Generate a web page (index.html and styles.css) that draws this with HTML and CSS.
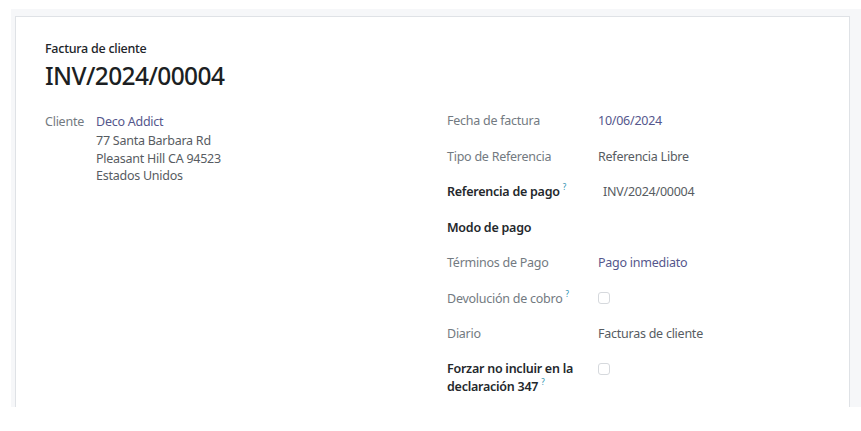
FILE: index.html
```html
<!DOCTYPE html>
<html lang="es">
<head>
<meta charset="utf-8">
<title>INV/2024/00004</title>
<link rel="stylesheet" href="styles.css">
</head>
<body>
<div class="sheet-bg">
  <div class="sheet">
    <div class="doc-type">Factura de cliente</div>
    <h1 class="doc-name">INV/2024/00004</h1>
    <div class="groups">
      <div class="group left">
        <div class="label">Cliente</div>
        <div class="value">
          <div class="link">Deco Addict</div>
          <div class="address">77 Santa Barbara Rd<br>Pleasant Hill CA 94523<br>Estados Unidos</div>
        </div>
      </div>
      <div class="group right">
        <div class="label">Fecha de factura</div>
        <div class="value link">10/06/2024</div>

        <div class="label">Tipo de Referencia</div>
        <div class="value">Referencia Libre</div>

        <div class="label strong">Referencia de pago<span class="help">?</span></div>
        <div class="value input">INV/2024/00004</div>

        <div class="label strong">Modo de pago</div>
        <div class="value"></div>

        <div class="label">Términos de Pago</div>
        <div class="value link">Pago inmediato</div>

        <div class="label">Devolución de cobro<span class="help">?</span></div>
        <div class="value"><span class="check"></span></div>

        <div class="label">Diario</div>
        <div class="value">Facturas de cliente</div>

        <div class="label strong multi">Forzar no incluir en la declaración 347<span class="help">?</span></div>
        <div class="value"><span class="check"></span></div>
      </div>
    </div>
  </div>
</div>
</body>
</html>
```

FILE: styles.css
```css
html, body {
  margin: 0;
  padding: 0;
  background: #ffffff;
}
body {
  font-family: "Noto Sans", "Open Sans", sans-serif;
  font-size: 12.5px;
  letter-spacing: -0.25px;
  color: #212529;
  height: 431px;
  overflow: hidden;
}
.sheet-bg {
  margin: 9px 0 0 11px;
  height: 398px;
  background: #f6f7f9;
  padding: 7px 0 0 4px;
  box-sizing: border-box;
  overflow: hidden;
}
.sheet {
  width: 835px;
  box-sizing: border-box;
  min-height: 420px;
  background: #ffffff;
  border: 1px solid #dfe2e6;
  padding: 22px 29px 0 29px;
}
.doc-type {
  font-size: 12.5px;
  line-height: 19px;
  font-weight: 500;
  color: #212529;
}
.doc-name {
  margin: 3px 0 0 0;
  font-size: 24.5px;
  letter-spacing: -0.6px;
  line-height: 30px;
  font-weight: 500;
  color: #1c1f23;
}
.groups {
  margin-top: 19px;
  display: grid;
  grid-template-columns: 1fr 1fr;
  column-gap: 29px;
}
.group {
  display: grid;
  align-content: start;
  line-height: 19px;
}
.group.left {
  grid-template-columns: 51px 1fr;
  margin-top: 2px;
}
.group.right {
  grid-template-columns: 151px 1fr;
  row-gap: 16.5px;
  margin-top: 1px;
}
.label {
  color: #737a81;
}
.label.strong {
  color: #24282c;
  font-weight: 600;
  padding-right: 8px;
}
.label.multi {
  line-height: 18px;
  padding-top: 0.5px;
}
.value {
  color: #575c62;
}
.link {
  color: #55578c;
}
.address {
  margin-top: 1px;
  line-height: 17.5px;
}
.input {
  padding-left: 5px;
}
.help {
  display: inline-block;
  color: #2a8fb0;
  font-size: 8px;
  line-height: 0;
  font-weight: 400;
  margin-left: 3px;
  vertical-align: 6px;
}
.check {
  display: inline-block;
  width: 10px;
  height: 10px;
  border: 1px solid #d6d9dd;
  border-radius: 3px;
  margin-top: 3px;
  vertical-align: top;
}
```
